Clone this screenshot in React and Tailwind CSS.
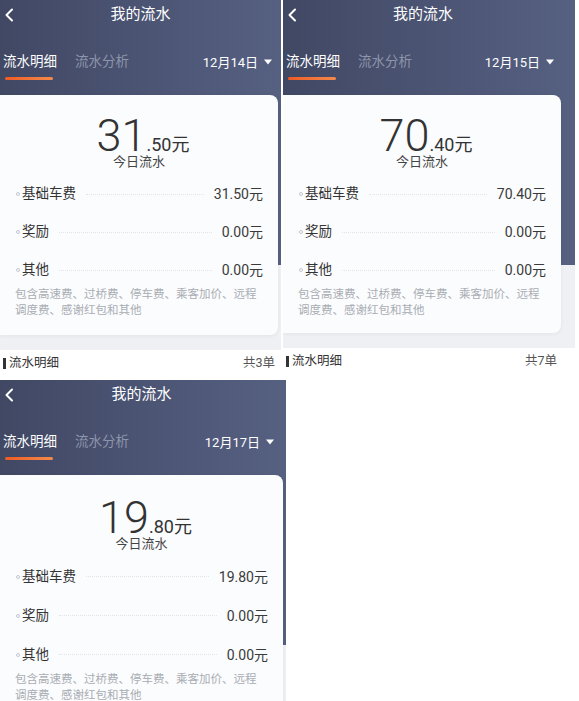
import React from "react";

const FONT = "font-['Roboto','Noto_Sans_CJK_SC',sans-serif]";

function Chevron() {
  return (
    <svg width="10" height="14" viewBox="0 0 10 14" fill="none">
      <path d="M8 1.5 L2.5 7 L8 12.5" stroke="white" strokeWidth="2" strokeLinecap="round" strokeLinejoin="round" />
    </svg>
  );
}

function Caret() {
  return (
    <svg width="8" height="6" viewBox="0 0 8 6">
      <path d="M0 0.5 H8 L4 5.5 Z" fill="white" />
    </svg>
  );
}

function Row({ label, amount, h }) {
  return (
    <div className={`flex items-center pl-[16px] pr-[15px] ${h}`}>
      <span className="h-[4px] w-[4px] shrink-0 rounded-full border border-[#c3c8d0]" />
      <span className="ml-[2px] text-[13.5px] leading-none text-[#333]">{label}</span>
      <span className="mx-[10px] flex-1 border-t border-dotted border-[#e1e4e9]" />
      <span className="text-[14px] leading-none text-[#3a3a3a]">{amount}</span>
    </div>
  );
}

function Panel({ size, cardCls, rowH, topPad, date, big, dec, base, count, contentW }) {
  return (
    <div className={`flex shrink-0 flex-col overflow-hidden bg-[#eef0f3] ${FONT} ${size}`}>
      <div className="h-[265px] shrink-0 bg-gradient-to-r from-[#414864] via-[#4b5473] to-[#566081] text-white">
        <div className={`flex flex-col ${contentW}`}>
          <div className="grid h-[28px] grid-cols-[40px_1fr_40px] items-center">
            <div className="pl-[4px] pt-[1px]">
              <Chevron />
            </div>
            <div className="text-center text-[15px] leading-none">我的流水</div>
            <div />
          </div>
          <div className="mt-[20px] flex h-[28px] items-center pl-[3px] pr-[9px]">
            <span className="text-[13.5px] leading-none text-white">流水明细</span>
            <span className="ml-[18px] text-[13.5px] leading-none text-[#8e95ab]">流水分析</span>
            <span className="ml-auto text-[13px] leading-none text-white">{date}</span>
            <span className="ml-[6px] flex items-center">
              <Caret />
            </span>
          </div>
          <div className="ml-[5px] mt-[1px] h-[3px] w-[48px] rounded-full bg-gradient-to-r from-[#ef5a24] to-[#f38a4a]" />
        </div>
      </div>
      <div className={`-mt-[170px] shrink-0 rounded-r-[8px] bg-[#fbfcfe] shadow-[0_1px_4px_rgba(0,0,0,0.05)] ${cardCls}`}>
        <div className={`flex h-[38px] items-end justify-center pl-[8px] leading-none text-[#333] ${topPad}`}>
          <span className="text-[45px] font-light leading-[34px]">{big}</span>
          <span className="text-[18px] leading-[16px]">{dec}元</span>
        </div>
        <div className="mt-[1px] text-center text-[13px] leading-[16px] text-[#444]">今日流水</div>
        <div className="mt-[5px]">
          <Row label="基础车费" amount={base} h={rowH} />
          <Row label="奖励" amount="0.00元" h={rowH} />
          <Row label="其他" amount="0.00元" h={rowH} />
        </div>
        <div className="-mt-[3px] px-[15px] text-[11.5px] leading-[16px] text-[#a9adb3]">
          包含高速费、过桥费、停车费、乘客加价、远程
          <br />
          调度费、感谢红包和其他
        </div>
      </div>
      <div className="mt-[15px] h-[27px] shrink-0 bg-white">
        <div className={`flex h-full items-center pl-[3px] pr-[6px] ${contentW}`}>
          <span className="h-[11px] w-[3px] bg-[#333]" />
          <span className="ml-[3px] text-[12.5px] leading-none text-[#333]">流水明细</span>
          <span className="ml-auto text-[12.5px] leading-none text-[#555]">共{count}单</span>
        </div>
      </div>
    </div>
  );
}

export default function App() {
  return (
    <div className="h-[701px] w-[579px] overflow-hidden bg-white">
      <div className="flex h-[377px] gap-[2px]">
        <Panel
          size="w-[281px] h-[377px]"
          contentW="w-[281px]"
          cardCls="w-[278px] h-[240px]"
          rowH="h-[38px]"
          topPad="mt-[20px]"
          date="12月14日"
          big="31"
          dec=".50"
          base="31.50元"
          count="3"
        />
        <Panel
          size="w-[292px] h-[374px]"
          contentW="w-[280px]"
          cardCls="w-[278px] h-[238px]"
          rowH="h-[38px]"
          topPad="mt-[20px]"
          date="12月15日"
          big="70"
          dec=".40"
          base="70.40元"
          count="7"
        />
      </div>
      <div className="mt-[3px]">
        <Panel
          size="w-[286px] h-[321px]"
          contentW="w-[283px]"
          cardCls="w-[283px] h-[250px]"
          rowH="h-[39px]"
          topPad="mt-[22px]"
          date="12月17日"
          big="19"
          dec=".80"
          base="19.80元"
          count="5"
        />
      </div>
    </div>
  );
}
